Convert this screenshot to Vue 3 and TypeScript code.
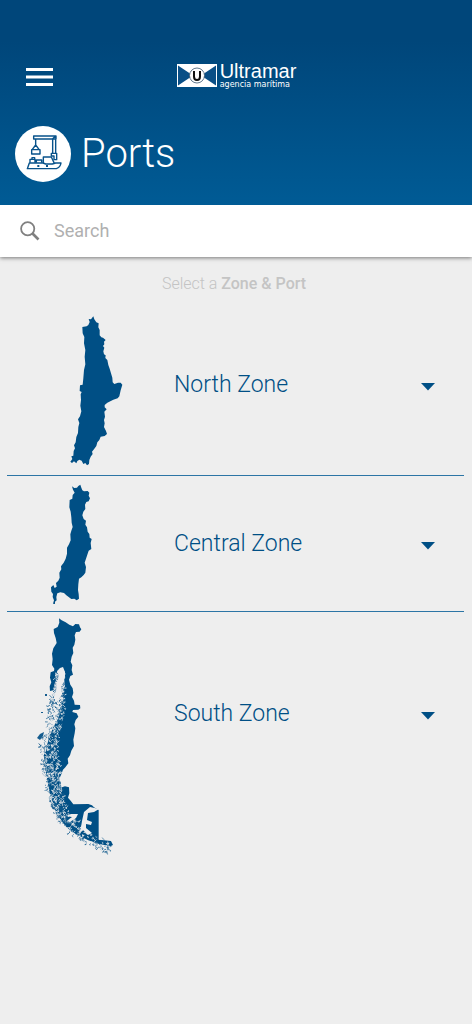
<script setup lang="ts">
import { ref } from 'vue'

interface Zone {
  id: string
  name: string
  viewBox: string
  height: number
  origin: string
  outline: string
}

const search = ref('')

const zones: Zone[] = [
  {
    id: 'north',
    name: 'North Zone',
    viewBox: '7 295 160 180',
    height: 180,
    origin: 'translate(50 305) scale(0.33333)',
    outline:
      'M130 34 L133 43 L139 52 L146 55 L145 67 L149 75 L149 91 L154 97 L159 98 L167 105 L162 110 L163 118 L159 123 L163 128 L160 139 L162 148 L167 151 L166 159 L172 165 L175 180 L179 191 L183 205 L187 218 L188 232 L193 237 L204 233 L212 233 L217 239 L212 256 L208 274 L203 280 L190 284 L172 293 L164 300 L164 307 L170 313 L163 320 L165 335 L162 345 L164 355 L162 366 L168 378 L171 387 L164 393 L152 395 L148 405 L142 412 L139 423 L133 431 L126 440 L128 447 L122 455 L118 465 L117 477 L111 481 L106 474 L100 477 L95 467 L88 464 L82 468 L79 475 L72 469 L66 474 L61 470 L67 462 L64 454 L70 452 L71 438 L75 430 L72 421 L77 412 L79 396 L84 384 L85 366 L88 354 L84 343 L90 334 L94 319 L91 302 L93 285 L92 268 L95 261 L89 258 L90 241 L98 239 L100 220 L102 195 L106 178 L104 155 L106 135 L102 115 L103 96 L98 85 L97 66 L110 64 L115 60 L119 51 L116 42 L123 43 Z',
  },
  {
    id: 'central',
    name: 'Central Zone',
    viewBox: '7 476 160 135',
    height: 135,
    origin: 'translate(35 470) scale(0.33333)',
    outline:
      'M111 49 L118 54 L126 53 L130 48 L136 44 L139 53 L142 61 L147 64 L158 63 L163 68 L161 77 L165 85 L161 94 L154 96 L150 104 L151 117 L145 125 L142 136 L146 147 L153 152 L151 164 L156 172 L158 185 L163 192 L164 203 L170 207 L167 219 L169 237 L161 242 L157 254 L153 266 L149 278 L153 291 L151 308 L146 315 L139 322 L132 326 L130 343 L129 360 L131 372 L132 386 L125 391 L118 386 L109 387 L101 381 L94 376 L87 369 L76 367 L67 370 L64 381 L65 391 L60 395 L60 402 L54 401 L57 391 L53 381 L54 372 L49 365 L48 352 L55 345 L59 354 L65 350 L63 339 L70 332 L74 323 L73 308 L79 298 L78 289 L86 278 L92 266 L96 251 L96 233 L102 223 L107 211 L106 193 L109 182 L113 171 L110 158 L109 142 L107 125 L103 112 L104 90 L112 86 L113 75 L119 68 L114 59 Z',
  },
  {
    id: 'south',
    name: 'South Zone',
    viewBox: '7 612 160 248',
    height: 248,
    origin: 'translate(25 605) scale(0.33333)',
    outline:
      'M102 40 L110 46 L122 52 L133 59 L144 64 L151 57 L162 58 L165 67 L169 73 L164 80 L153 81 L149 91 L151 104 L148 119 L143 128 L145 144 L140 155 L137 170 L142 181 L140 195 L144 209 L136 213 L132 224 L136 239 L143 250 L145 264 L141 276 L147 287 L149 299 L165 300 L166 310 L160 314 L144 315 L142 321 L155 325 L160 335 L152 345 L148 358 L151 370 L149 385 L145 404 L147 423 L139 437 L135 451 L128 461 L130 475 L121 487 L114 494 L108 510 L103 522 L103 538 L111 547 L120 544 L132 547 L133 565 L129 578 L137 587 L145 598 L190 597 L201 601 L207 607 L221 615 L221 704 L236 706 L258 708 L264 720 L256 724 L220 716 L190 706 L165 694 L140 680 L122 664 L106 642 L92 620 L86 600 L80 582 L75 566 L70 547 L66 519 L62 498 L60 474 L56 451 L62 440 L66 420 L70 405 L78 383 L85 366 L95 349 L104 330 L108 300 L115 282 L108 270 L114 256 L120 243 L117 222 L121 206 L117 197 L108 191 L98 199 L91 204 L93 222 L88 239 L88 255 L75 258 L74 244 L79 232 L75 218 L77 202 L87 198 L88 191 L81 180 L83 162 L81 146 L85 130 L95 114 L92 99 L87 84 L86 72 L98 66 L103 53 Z',
  },
]

// Archipelago along the southern coast: rows of [y, from x, to x].
const coast: [number, number, number][] = [
  [672, 56, 64],
  [692, 54, 64],
  [702, 49, 64],
  [720, 46, 62],
  [735, 45, 59],
  [741, 40, 57],
  [750, 41, 57],
  [765, 42, 59],
  [780, 45, 59],
  [798, 48, 65],
  [810, 52, 66],
  [822, 58, 78],
  [834, 69, 90],
  [842, 82, 109],
  [848, 95, 112],
  [852, 105, 110],
]

function scatter(seed: number, count: number, spread: number): string {
  let state = seed
  const next = (): number => {
    state = (state * 1664525 + 1013904223) % 4294967296
    return state / 4294967296
  }
  let path = ''
  for (let i = 0; i < count; i++) {
    const y = coast[0][0] + next() * (coast[coast.length - 1][0] - coast[0][0])
    const k = Math.max(1, coast.findIndex((row) => row[0] >= y))
    const [y0, a0, b0] = coast[k - 1]
    const [y1, a1, b1] = coast[k]
    const t = (y - y0) / (y1 - y0)
    const from = a0 + (a1 - a0) * t
    const to = b0 + (b1 - b0) * t
    const x = from + next() * (to - from + spread)
    const step = (): string => ((next() - 0.5) * 3.6).toFixed(1)
    path += `M${x.toFixed(1)} ${y.toFixed(1)}l${step()} ${step()}l${step()} ${step()}`
  }
  return path
}

const islands = scatter(17, 560, 0)
const channels = scatter(91, 760, 1)
const islets = scatter(53, 160, 0)
</script>

<template>
  <main class="screen">
    <header class="header">
      <div class="topbar">
        <button class="menu" type="button" aria-label="Menu">
          <svg width="28" height="20" viewBox="0 0 28 20" aria-hidden="true">
            <path d="M0 3.5H27M0 11H27M0 18.5H27" stroke="#fff" stroke-width="3" />
          </svg>
        </button>
        <div class="brand">
          <svg width="40" height="24" viewBox="0 0 40 24" aria-hidden="true">
            <rect x="0.5" y="0.5" width="39" height="22" fill="#fff" stroke="#fff" />
            <path d="M1 1.5L16 11.5L1 21.5ZM39 1.5L24 11.5L39 21.5Z" fill="#0a4f86" />
            <circle cx="20" cy="11.5" r="7.5" fill="#fff" stroke="#34516b" stroke-width="0.8" />
            <path d="M17 7V12.5Q17 16 20 16T23 12.5V7" fill="none" stroke="#111" stroke-width="2" />
          </svg>
          <div class="brand-text">
            <span class="brand-name">Ultramar</span>
            <span class="brand-sub">agencia marítima</span>
          </div>
        </div>
      </div>
      <div class="title">
        <svg width="56" height="56" viewBox="10 10 168 168" aria-hidden="true">
          <circle cx="94" cy="94" r="84" fill="#fff" />
          <g fill="none" stroke="#07528a" stroke-width="4.2" stroke-linejoin="round">
            <path d="M66 40H133V49H66ZM123 49V92M132 49V92M122 49L132 40M119 92H135V111H127V100H119Z" />
            <path d="M72 49V67L62 80M72 67L82 80M60 81H85V94H60Z" />
            <path d="M47 138L53 121H94L102 124H122L132 121H148Q146 134 134 138Z" />
            <path d="M55 120V110H70V120M74 120V112H90V120M95 121V103H119L128 122" />
            <path d="M61 109V105H69V110" />
          </g>
          <path d="M77 127H83V133H77ZM103 127H109V133H103Z" fill="#07528a" />
        </svg>
        <h1>Ports</h1>
      </div>
    </header>

    <form class="search" role="search" @submit.prevent>
      <label for="port-search" aria-label="Search">
        <svg width="20" height="20" viewBox="0 0 20 20" fill="none" stroke="#808080" aria-hidden="true">
          <circle cx="7.7" cy="7.7" r="6.6" stroke-width="1.8" />
          <path d="M12.5 12.5L18.5 18.5" stroke-width="2.6" />
        </svg>
      </label>
      <input id="port-search" v-model="search" type="text" placeholder="Search" />
    </form>

    <p class="hint">Select a <strong>Zone &amp; Port</strong></p>

    <ul class="zones">
      <li v-for="zone in zones" :key="zone.id">
        <button class="zone" :class="zone.id" type="button">
          <svg class="map" width="160" :height="zone.height" :viewBox="zone.viewBox" aria-hidden="true">
            <path :d="zone.outline" :transform="zone.origin" fill="#004f85" />
            <g v-if="zone.id === 'south'" fill="none">
              <path :d="islands" stroke="#135b8d" stroke-width="0.8" />
              <path :d="channels" stroke="#eee" stroke-width="0.7" />
              <path :d="islets" stroke="#1c6191" stroke-width="0.6" />
              <path
                d="M60 668L63 667L65 672L64 682L61 686L62 694L57 702L54 698L56 691L57 682L59 676L57 671ZM66 816L71 814L78 814L76 818L70 822L67 821L72 817ZM84 812L90 807L99 809L94 812L88 813L87 820L92 822L91 825L86 824L86 828L92 833L88 835L83 830L80 833L82 821Z"
                fill="#eee"
              />
              <path d="M45 694H47V696H45ZM41 712H43V713H41ZM37 738L40 734L44 732L43 736L40 740Z" fill="#155c8e" />
            </g>
          </svg>
          <span class="name">{{ zone.name }}</span>
          <svg class="arrow" width="14" height="8" viewBox="0 0 14 8" aria-hidden="true">
            <path d="M0 0H14L7 7.5Z" fill="#004f85" />
          </svg>
        </button>
      </li>
    </ul>
  </main>
</template>

<style>
body {
  margin: 0;
  background: #eee;
}
</style>

<style scoped>
.screen {
  min-height: 100vh;
  background: #eee;
  font-family: Roboto, "Liberation Sans", sans-serif;
}

.header {
  box-sizing: border-box;
  padding: 63px 16px 23px 15px;
  background: linear-gradient(#00467a 20%, #005b95);
  color: #fff;
}

.topbar {
  display: grid;
  grid-template-columns: 1fr auto 1fr;
  align-items: center;
  height: 24px;
}

button {
  margin: 0;
  border: 0;
  padding: 0;
  background: none;
  color: inherit;
  font: inherit;
  text-align: left;
  cursor: pointer;
}

svg {
  display: block;
}

.menu {
  justify-self: start;
  margin-left: 11px;
}

.brand {
  display: flex;
  align-items: center;
  gap: 3px;
  margin-left: 2px;
}

.brand-text {
  display: flex;
  flex-direction: column;
  gap: 2px;
  font-family: "Liberation Sans", Arial, sans-serif;
}

.brand-name {
  font-size: 20px;
  line-height: 16px;
}

.brand-sub {
  font-family: "DejaVu Sans", sans-serif;
  font-size: 8px;
  line-height: 8px;
}

.title {
  display: flex;
  align-items: center;
  gap: 10px;
  margin-top: 39px;
}

h1 {
  margin: 0;
  font-size: 40px;
  line-height: 56px;
  font-weight: 300;
}

.search {
  position: relative;
  display: flex;
  align-items: center;
  gap: 14px;
  height: 52px;
  padding: 0 20px;
  background: #fff;
  box-shadow: 0 1px 4px rgba(0, 0, 0, 0.5);
  clip-path: inset(0 0 -8px 0);
}

.search input {
  flex: 1;
  min-width: 0;
  border: 0;
  padding: 0;
  outline: 0;
  background: transparent;
  color: #555;
  font: 400 18px/24px Roboto, "Liberation Sans", sans-serif;
}

.search input::placeholder {
  color: #b0b0b0;
  opacity: 1;
}

.hint {
  margin: 0;
  padding: 17px 4px 1px 0;
  color: #c4c4c4;
  font-size: 16px;
  line-height: 20px;
  font-weight: 300;
  text-align: center;
}

.hint strong {
  font-weight: 500;
}

.zones {
  margin: 0;
  padding: 0 8px 0 7px;
  list-style: none;
}

.zones li + li {
  border-top: 1px solid #2c75a5;
}

.zone {
  display: grid;
  grid-template-columns: 160px 1fr auto;
  column-gap: 7px;
  align-items: center;
  width: 100%;
  padding-right: 29px;
  color: #004f85;
}

.name {
  font-size: 23px;
  line-height: 28px;
  font-weight: 300;
}

.arrow {
  margin-top: 4px;
}

.south .name,
.south .arrow {
  margin-bottom: 44px;
}
</style>
